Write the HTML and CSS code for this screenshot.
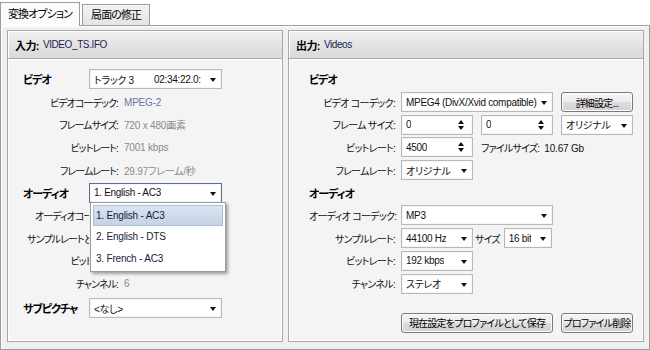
FILE: index.html
```html
<!DOCTYPE html>
<html lang="ja">
<head>
<meta charset="utf-8">
<link rel="stylesheet" href="styles.css">
</head>
<body>
<div class="tabs">
  <div class="tab active">変換オプション</div>
  <div class="tab">局面の修正</div>
</div>
<div class="frame">
  <section class="panel left">
    <header class="phead"><b>入力:</b><span class="pval">VIDEO_TS.IFO</span></header>
    <div class="pbody">
      <div class="row"><span class="hlabel">ビデオ</span>
        <div class="select w133"><span class="stext">トラック 3</span><span class="stext time">02:34:22.0:</span><i class="arrow"></i></div>
      </div>
      <div class="row"><span class="label">ビデオコーデック:</span><span class="val blue">MPEG-2</span></div>
      <div class="row"><span class="label">フレームサイズ:</span><span class="val">720 x 480画素</span></div>
      <div class="row"><span class="label">ビットレート:</span><span class="val">7001 kbps</span></div>
      <div class="row"><span class="label">フレームレート:</span><span class="val">29.97フレーム/秒</span></div>
      <div class="row"><span class="hlabel">オーディオ</span>
        <div class="select w133 focus"><span class="stext">1. English - AC3</span><i class="arrow"></i>
          <ul class="dropdown">
            <li class="sel">1. English - AC3</li>
            <li>2. English - DTS</li>
            <li>3. French - AC3</li>
          </ul>
        </div>
      </div>
      <div class="row"><span class="clip"><span class="label">オーディオコーデック:</span></span></div>
      <div class="row"><span class="clip"><span class="label">サンプルレートとサイズ:</span></span></div>
      <div class="row"><span class="clip"><span class="label">ビットレート:</span></span></div>
      <div class="row"><span class="label">チャンネル:</span><span class="val">6</span></div>
      <div class="row last"><span class="hlabel">サブピクチャ</span>
        <div class="select w133"><span class="stext">&lt;なし&gt;</span><i class="arrow"></i></div>
      </div>
    </div>
  </section>
  <section class="panel right">
    <header class="phead"><b>出力:</b><span class="pval">Videos</span></header>
    <div class="pbody rbody">
      <div class="row"><span class="hlabel">ビデオ</span></div>
      <div class="row"><span class="rlabel">ビデオ コーデック:</span>
        <div class="select w152"><span class="stext">MPEG4 (DivX/Xvid compatible)</span><i class="arrow"></i></div>
        <button class="btn w72">詳細設定...</button>
      </div>
      <div class="row"><span class="rlabel">フレーム サイズ:</span>
        <div class="spin w72"><span class="stext">0</span><i class="updown"></i></div>
        <div class="spin w72"><span class="stext">0</span><i class="updown"></i></div>
        <div class="select w72"><span class="stext">オリジナル</span><i class="arrow"></i></div>
      </div>
      <div class="row"><span class="rlabel">ビットレート:</span>
        <div class="spin w72"><span class="stext">4500</span><i class="updown"></i></div>
        <span class="fsize"><span class="jp">ファイルサイズ:</span> &nbsp;10.67 Gb</span>
      </div>
      <div class="row"><span class="rlabel">フレームレート:</span>
        <div class="select w72"><span class="stext">オリジナル</span><i class="arrow"></i></div>
      </div>
      <div class="row"><span class="hlabel">オーディオ</span></div>
      <div class="row"><span class="rlabel">オーディオ コーデック:</span>
        <div class="select w152"><span class="stext">MP3</span><i class="arrow"></i></div>
      </div>
      <div class="row"><span class="rlabel">サンプルレート:</span>
        <div class="select w72"><span class="stext">44100 Hz</span><i class="arrow"></i></div>
        <span class="size">サイズ</span>
        <div class="select w48"><span class="stext">16 bit</span><i class="arrow"></i></div>
      </div>
      <div class="row"><span class="rlabel">ビットレート:</span>
        <div class="select w72"><span class="stext">192 kbps</span><i class="arrow"></i></div>
      </div>
      <div class="row"><span class="rlabel">チャンネル:</span>
        <div class="select w72"><span class="stext">ステレオ</span><i class="arrow"></i></div>
      </div>
      <div class="row buttons"><span class="rlabel"></span>
        <button class="btn w152">現在設定をプロファイルとして保存</button>
        <button class="btn w72">プロファイル削除</button>
      </div>
    </div>
  </section>
</div>
</body>
</html>
```

FILE: styles.css
```css
* { box-sizing: border-box; }
html, body { margin: 0; padding: 0; }
body {
  width: 650px;
  height: 350px;
  background: #ffffff;
  font-family: "Liberation Sans", "Noto Sans CJK JP", sans-serif;
  font-size: 10px;
  color: #111;
  font-feature-settings: "palt";
  overflow: hidden;
}
.tabs {
  display: flex;
  align-items: flex-end;
  height: 25px;
  position: relative;
  z-index: 2;
}
.tab {
  height: 21px;
  padding: 0 8px;
  border: 1px solid #9a9ca2;
  border-bottom: none;
  background: linear-gradient(#f3f3f3, #e4e4e4);
  font-size: 11px;
  line-height: 20px;
  margin-left: 2px;
  color: #000;
  letter-spacing: -0.9px;
}
.tab.active {
  height: 24px;
  margin-left: 0;
  background: #fbfbfb;
  line-height: 22px;
  margin-bottom: -1px;
  padding: 0 7px;
}
.frame {
  height: 325px;
  border: 1px solid #9a9ca2;
  background: #f0f0f0;
  padding: 4px 5px 7px 6px;
  display: flex;
  gap: 5px;
  box-shadow: inset 1px 1px 0 #fff;
}
.panel {
  border: 1px solid #a8a8a8;
  box-shadow: inset 0 0 0 1px #fff;
  background: #f4f4f4;
  display: flex;
  flex-direction: column;
}
.panel.left { width: 276px; }
.panel.right { flex: 1; }
.phead {
  height: 28px;
  background: linear-gradient(#f0f0f0, #d9d9d9);
  border-bottom: 1px solid #a9a9a9;
  box-shadow: inset 1px 1px 0 #fff, 0 1px 0 #fff;
  display: flex;
  align-items: center;
  padding-left: 7px;
  font-size: 11px;
  color: #000;
}
.phead b { font-weight: bold; margin-right: 4px; letter-spacing: -0.6px; }
.pval { font-size: 10px; color: #1c1c55; letter-spacing: -0.4px; }
.pbody {
  padding: 9px 0 0 15px;
  display: flex;
  flex-direction: column;
}
.rbody { padding-left: 20px; }
.row {
  height: 22.7px;
  display: flex;
  align-items: center;
  position: relative;
}
.row.last { margin-top: 2px; }
.row.buttons { margin-top: 17px; height: 22px; }
.hlabel {
  width: 66px;
  font-weight: bold;
  font-size: 11px;
  color: #000;
  letter-spacing: -1px;
}
.label {
  display: inline-block;
  width: 95px;
  text-align: right;
  margin-right: 6px;
  white-space: nowrap;
  letter-spacing: -0.9px;
}
.clip {
  width: 66px;
  overflow: hidden;
  white-space: nowrap;
}
.rlabel {
  width: 86px;
  text-align: right;
  margin-right: 6px;
  white-space: nowrap;
  letter-spacing: -0.7px;
}
.val { color: #8a8a8a; letter-spacing: -0.2px; }
.val.blue { color: #6a77a6; }
.select, .spin {
  height: 20px;
  background: #fff;
  border: 1px solid #b8b8b8;
  box-shadow: inset 0 0 0 1px #f6f6f6;
  display: flex;
  align-items: center;
  padding: 0 4px;
  position: relative;
  margin-right: 8px;
  white-space: nowrap;
  letter-spacing: -0.3px;
}
.select.focus { border-color: #5c6f9c; }
.stext { overflow: hidden; }
.time { margin-left: auto; margin-right: 9px; width: 54px; }
.w133 { width: 133px; }
.w152 { width: 152px; }
.w72 { width: 72px; }
.w48 { width: 48px; }
.arrow {
  position: absolute;
  right: 5px;
  top: 8px;
  width: 0;
  height: 0;
  border-left: 3.5px solid transparent;
  border-right: 3.5px solid transparent;
  border-top: 4px solid #111;
}
.updown {
  position: absolute;
  right: 7px;
  top: 4px;
  width: 7px;
  height: 10px;
}
.updown::before, .updown::after {
  content: "";
  position: absolute;
  left: 0;
  border-left: 3.5px solid transparent;
  border-right: 3.5px solid transparent;
}
.updown::before { top: 0; border-bottom: 4px solid #111; }
.updown::after { bottom: 0; border-top: 4px solid #111; }
.fsize { letter-spacing: -0.2px; }
.jp { letter-spacing: -0.8px; }
.size { margin-left: -6px; margin-right: 4px; letter-spacing: -0.8px; }
.btn {
  height: 20px;
  border: 1px solid #7a7a7a;
  border-radius: 3px;
  background: linear-gradient(#f6f6f6 0%, #ebebeb 50%, #dddddd 51%, #d2d2d2 100%);
  box-shadow: inset 0 0 0 1px #fcfcfc;
  font-family: inherit;
  font-size: 10px;
  color: #000;
  padding: 0;
  margin-right: 8px;
  white-space: nowrap;
  letter-spacing: -0.8px;
  font-feature-settings: "palt";
}
.dropdown {
  position: absolute;
  left: 0px;
  top: 18px;
  width: 136px;
  margin: 0;
  padding: 2px;
  list-style: none;
  background: #fff;
  border: 1px solid #9a9a9a;
  box-shadow: 2px 2px 3px rgba(0,0,0,0.35);
  z-index: 5;
}
.dropdown li {
  height: 21.5px;
  line-height: 21px;
  padding-left: 3px;
  color: #1a1a3a;
  letter-spacing: -0.2px;
}
.dropdown li.sel {
  background: linear-gradient(#dbe4f1, #c5d3e7);
  border: 1px solid #aebcd4;
  line-height: 19px;
  padding-left: 2px;
}
```
